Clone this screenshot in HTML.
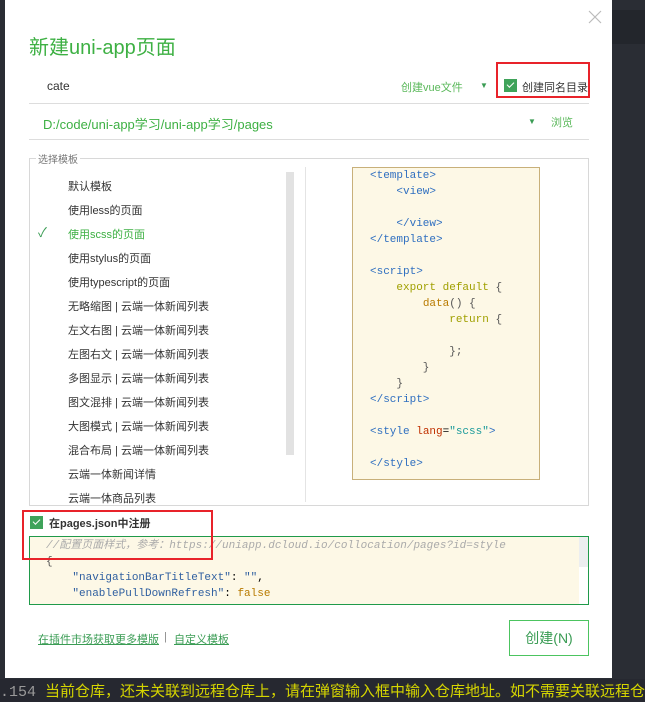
<!DOCTYPE html>
<html><head><meta charset="utf-8"><style>
*{margin:0;padding:0;box-sizing:border-box}
body{width:645px;height:702px;background:#2a2d34;position:relative;overflow:hidden;font-family:"Liberation Sans","Noto Sans CJK SC",sans-serif}
.a{position:absolute}
.dlg{left:5px;top:0;width:607px;height:678px;background:#fff}
.li{position:absolute;left:68px;font-size:11px;color:#333;white-space:nowrap}
.code{font-family:"Liberation Mono","DejaVu Sans Mono","Noto Sans CJK SC",monospace;font-size:11px;white-space:pre;position:absolute;line-height:16px}
.t{color:#2f6fc0}.k{color:#a0a000}.f{color:#b87a00}.o{color:#555}
.cb{position:absolute;width:13px;height:13px;background:#3fa35a}
.cb:after{content:"";position:absolute;left:3px;top:3px;width:6px;height:3px;border-left:1.5px solid #fff;border-bottom:1.5px solid #fff;transform:rotate(-45deg)}
</style></head><body>
<div class="a" style="left:612px;top:10px;width:33px;height:34px;background:#23262c"></div>
<div class="a dlg"></div>
<svg class="a" style="left:588px;top:10px" width="14" height="14"><path d="M1 1L13 13M13 1L1 13" stroke="#bbb" stroke-width="1.2"/></svg>
<div class="a" style="left:29px;top:31px;font-size:20px;color:#3db043">新建uni-app页面</div>
<div class="a" style="left:47px;top:79px;font-size:12px;color:#333">cate</div>
<div class="a" style="left:401px;top:79px;font-size:11px;color:#5ab85a">创建vue文件</div>
<div class="a" style="left:480px;top:81px;font-size:8px;color:#3a9c54">▼</div>
<div class="cb" style="left:504px;top:79px"></div>
<div class="a" style="left:522px;top:79px;font-size:11px;color:#333">创建同名目录</div>
<div class="a" style="left:496px;top:62px;width:94px;height:36px;border:2px solid #e8232a"></div>
<div class="a" style="left:29px;top:103px;width:560px;height:1px;background:#ddd"></div>
<div class="a" style="left:43px;top:114px;font-size:13px;color:#3db043">D:/code/uni-app学习/uni-app学习/pages</div>
<div class="a" style="left:528px;top:117px;font-size:8px;color:#3a9c54">▼</div>
<div class="a" style="left:551px;top:114px;font-size:11px;color:#5ab85a">浏览</div>
<div class="a" style="left:29px;top:139px;width:560px;height:1px;background:#ddd"></div>
<div class="a" style="left:29px;top:158px;width:560px;height:348px;border:1px solid #d8d8d8"></div>
<div class="a" style="left:36px;top:151px;font-size:10px;color:#777;background:#fff;padding:0 2px">选择模板</div>
<div class="a" style="left:305px;top:167px;width:1px;height:335px;background:#e4e4e4"></div>
<div class="a" style="left:286px;top:172px;width:8px;height:283px;background:#e2e2e2"></div>
<div class="li" style="top:178px">默认模板</div>
<div class="li" style="top:202px">使用less的页面</div>
<div class="a" style="left:38px;top:222px;font-size:13px;color:#3a9c54">✓</div>
<div class="li" style="top:226px;color:#3db043">使用scss的页面</div>
<div class="li" style="top:250px">使用stylus的页面</div>
<div class="li" style="top:274px">使用typescript的页面</div>
<div class="li" style="top:298px">无略缩图 | 云端一体新闻列表</div>
<div class="li" style="top:322px">左文右图 | 云端一体新闻列表</div>
<div class="li" style="top:346px">左图右文 | 云端一体新闻列表</div>
<div class="li" style="top:370px">多图显示 | 云端一体新闻列表</div>
<div class="li" style="top:394px">图文混排 | 云端一体新闻列表</div>
<div class="li" style="top:418px">大图模式 | 云端一体新闻列表</div>
<div class="li" style="top:442px">混合布局 | 云端一体新闻列表</div>
<div class="li" style="top:466px">云端一体新闻详情</div>
<div class="li" style="top:490px">云端一体商品列表</div>
<div class="a" style="left:352px;top:167px;width:188px;height:313px;background:#fdf8e6;border:1px solid #c8b07a"></div>
<div class="code" style="left:370px;top:168px"><span class="t">&lt;template&gt;
    &lt;view&gt;

    &lt;/view&gt;
&lt;/template&gt;

&lt;script&gt;</span>
    <span class="k">export default</span> <span class="o">{</span>
        <span class="f">data</span><span class="o">() {</span>
            <span class="k">return</span> <span class="o">{

            };
        }
    }</span>
<span class="t">&lt;/script&gt;

&lt;style</span> <span style="color:#c03000">lang</span>=<span style="color:#1a9a9a">"scss"</span><span class="t">&gt;

&lt;/style&gt;</span></div>
<div class="cb" style="left:30px;top:516px"></div>
<div class="a" style="left:49px;top:515px;font-size:11px;font-weight:bold;color:#333">在pages.json中注册</div>
<div class="a" style="left:29px;top:536px;width:560px;height:69px;background:#fdf8e6;border:1px solid #1f9a4a;overflow:hidden">
<div class="a" style="right:0;top:0;width:9px;height:30px;background:#eceef0"></div>
<div class="a" style="right:0;top:30px;width:9px;height:40px;background:#fff"></div>
<div class="code" style="left:16px;top:1px;line-height:16px"><i style="color:#aaa">//配置页面样式，参考：https://uniapp.dcloud.io/collocation/pages?id=style</i>
<span class="o">{</span>
    <span style="color:#2f5fa0">"navigationBarTitleText"</span>: <span style="color:#2f5fa0">""</span>,
    <span style="color:#2f5fa0">"enablePullDownRefresh"</span>: <span class="f">false</span>
<span class="o">}</span></div></div>
<div class="a" style="left:22px;top:510px;width:191px;height:50px;border:2px solid #e8232a"></div>
<div class="a" style="left:38px;top:631px;font-size:11px;color:#3a9c54;text-decoration:underline">在插件市场获取更多模版</div>
<div class="a" style="left:164px;top:631px;font-size:11px;color:#888">|</div>
<div class="a" style="left:174px;top:631px;font-size:11px;color:#3a9c54;text-decoration:underline">自定义模板</div>
<div class="a" style="left:509px;top:620px;width:80px;height:36px;border:1px solid #4cc460;color:#3a9c54;font-size:14px;text-align:center;line-height:34px">创建(N)</div>
<div class="a" style="left:0;top:679px;width:645px;height:23px;background:#262830"></div>
<div class="a" style="left:0;top:680px;font-size:15px;white-space:nowrap;font-family:'Liberation Mono','Noto Sans CJK SC',monospace"><span style="color:#999">.154 </span><span style="color:#d5d500">当前仓库，还未关联到远程仓库上，请在弹窗输入框中输入仓库地址。如不需要关联远程仓库</span></div>
</body></html>
